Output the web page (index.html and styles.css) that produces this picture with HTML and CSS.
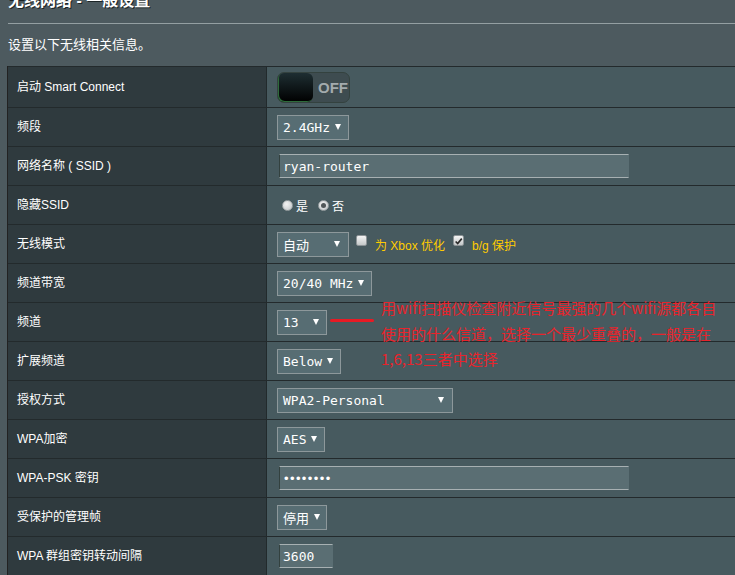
FILE: index.html
```html
<!DOCTYPE html>
<html lang="zh-CN">
<head>
<meta charset="utf-8">
<title>无线网络 - 一般设置</title>
<link rel="stylesheet" href="styles.css">
</head>
<body>
<div class="page">
  <h1 class="title">无线网络 - 一般设置</h1>
  <div class="sep"></div>
  <p class="intro">设置以下无线相关信息。</p>

  <div class="form">
    <div class="row first">
      <div class="lbl">启动 Smart Connect</div>
      <div class="val">
        <div class="switch"><span class="knob"></span><span class="off">OFF</span></div>
      </div>
    </div>
    <div class="row">
      <div class="lbl">频段</div>
      <div class="val"><div class="sel">2.4GHz<i class="arr"></i></div></div>
    </div>
    <div class="row">
      <div class="lbl">网络名称 ( SSID )</div>
      <div class="val"><div class="inp wide">ryan-router</div></div>
    </div>
    <div class="row">
      <div class="lbl">隐藏SSID</div>
      <div class="val">
        <span class="radio"></span><span class="rtxt">是</span>
        <span class="radio on"></span><span class="rtxt">否</span>
      </div>
    </div>
    <div class="row">
      <div class="lbl">无线模式</div>
      <div class="val">
        <div class="sel fixed w72 cjk">自动<i class="arr"></i></div>
        <span class="cb"></span><span class="ytxt">为 Xbox 优化</span>
        <span class="cb checked"><svg viewBox="0 0 11 11" width="11" height="11"><path d="M2 5.5 L4.5 8 L9.5 2" fill="none" stroke="#2a2a2a" stroke-width="2"/></svg></span><span class="ytxt">b/g 保护</span>
      </div>
    </div>
    <div class="row">
      <div class="lbl">频道带宽</div>
      <div class="val"><div class="sel">20/40 MHz<i class="arr"></i></div></div>
    </div>
    <div class="row">
      <div class="lbl">频道</div>
      <div class="val"><div class="sel fixed w50">13<i class="arr"></i></div></div>
    </div>
    <div class="row">
      <div class="lbl">扩展频道</div>
      <div class="val"><div class="sel">Below<i class="arr"></i></div></div>
    </div>
    <div class="row">
      <div class="lbl">授权方式</div>
      <div class="val"><div class="sel fixed w176">WPA2-Personal<i class="arr"></i></div></div>
    </div>
    <div class="row">
      <div class="lbl">WPA加密</div>
      <div class="val"><div class="sel">AES<i class="arr"></i></div></div>
    </div>
    <div class="row">
      <div class="lbl">WPA-PSK 密钥</div>
      <div class="val"><div class="inp wide dots">••••••••</div></div>
    </div>
    <div class="row">
      <div class="lbl">受保护的管理帧</div>
      <div class="val"><div class="sel fixed w50 cjk">停用<i class="arr"></i></div></div>
    </div>
    <div class="row">
      <div class="lbl">WPA 群组密钥转动间隔</div>
      <div class="val"><div class="inp short">3600</div></div>
    </div>

    <div class="note-line"></div>
    <div class="note">用wifi扫描仪检查附近信号最强的几个wifi源都各自<br>使用的什么信道，选择一个最少重叠的，一般是在<br>1,6,13三者中选择</div>
  </div>
</div>
</body>
</html>
```

FILE: styles.css
```css
html, body {
  margin: 0;
  padding: 0;
  overflow: hidden;
  background: #4d5a5f;
}
body {
  width: 735px;
  height: 575px;
  font-family: "Liberation Sans", Arial, "Noto Sans CJK SC", sans-serif;
  color: #fff;
}
.page {
  padding-left: 7px;
}
.title {
  margin: -9px 0 0 1px;
  font-size: 16px;
  line-height: 20px;
  font-weight: bold;
  color: #fff;
  text-shadow: 1px 1px 0 #1c2426;
}
.sep {
  margin: 12px 0 0 1px;
  height: 1px;
  background: #949fa2;
}
.intro {
  margin: 11px 0 0 1px;
  font-size: 13px;
  line-height: 20px;
  color: #fff;
}
.form {
  position: relative;
  margin-top: 11px;
  border-left: 1px solid #222;
}
.row {
  display: flex;
  height: 38px;
  border-top: 1px solid #232a2c;
}
.row.first {
  height: 40px;
}
.lbl {
  width: 249px;
  flex: none;
  padding: 0 0 4px 9px;
  box-sizing: content-box;
  display: flex;
  align-items: center;
  background: #2f3a3e;
  border-right: 1px solid #222a2c;
  font-size: 12px;
  color: #fff;
}
.val {
  flex: 1;
  padding-left: 10px;
  display: flex;
  align-items: center;
  background: #475a5f;
  font-size: 12px;
}
.switch {
  width: 71px;
  height: 29px;
  border: 1px solid #34423f;
  border-radius: 7px;
  background: #3e4c50;
  display: flex;
  align-items: center;
  box-sizing: content-box;
}
.knob {
  width: 35px;
  height: 29px;
  border-radius: 6px;
  background: linear-gradient(#1e2e32, #000);
  box-shadow: inset 1px -1px 0 #2d6b3a;
}
.off {
  margin-left: 5px;
  font-size: 15px;
  font-weight: bold;
  color: #a3abad;
}
.sel {
  display: inline-flex;
  align-items: center;
  height: 23px;
  padding: 0 7px 0 5px;
  gap: 5px;
  border: 1px solid #8d989b;
  background: #576d73;
  font-family: "DejaVu Sans Mono", "Noto Sans CJK SC", monospace;
  font-size: 13px;
  color: #fff;
  white-space: nowrap;
}
.sel.cjk {
  font-family: "Noto Sans CJK SC", sans-serif;
  font-size: 13px;
}
.sel.fixed {
  justify-content: space-between;
  box-sizing: border-box;
  height: 25px;
  padding-right: 8px;
}
.w72 { width: 72px; }
.w50 { width: 50px; }
.sel.fixed.w50 { padding-right: 7px; }
.w176 { width: 176px; }
.arr {
  display: block;
  flex: none;
  width: 0;
  height: 0;
  border-left: 3px solid transparent;
  border-right: 3px solid transparent;
  border-top: 6px solid #fff;
}
.inp {
  box-sizing: border-box;
  height: 24px;
  margin-left: 2px;
  padding-left: 3px;
  display: flex;
  align-items: center;
  background: #5a6e73;
  border-top: 1px solid #a7b0b2;
  border-bottom: 1px solid #a7b0b2;
  border-left: 1px solid #33413f;
  border-right: 1px solid #5a6e73;
  font-family: "DejaVu Sans Mono", monospace;
  font-size: 13px;
  color: #fff;
}
.inp.wide { width: 350px; }
.inp.short { width: 54px; }
.inp.dots {
  font-family: "Liberation Sans", sans-serif;
  font-size: 13px;
  letter-spacing: 1.4px;
  padding-left: 4px;
}
.radio {
  width: 11px;
  height: 11px;
  margin-left: 5px;
  border-radius: 50%;
  box-sizing: border-box;
  border: 1px solid #9aa1a3;
  background: radial-gradient(circle at 40% 35%, #f2f2f2, #bfc4c6);
  display: inline-flex;
  align-items: center;
  justify-content: center;
}
.radio.on {
  margin-left: 10px;
}
.radio.on::after {
  content: "";
  width: 5px;
  height: 5px;
  border-radius: 50%;
  background: #505658;
}
.rtxt {
  margin-left: 3px;
  font-family: "Noto Sans CJK SC", sans-serif;
  font-size: 12px;
  color: #fff;
}
.cb {
  width: 11px;
  height: 11px;
  box-sizing: border-box;
  margin-left: 7px;
  margin-top: -8px;
  border: 1px solid #8d9497;
  border-radius: 2px;
  background: linear-gradient(#f4f4f4, #c4c8c9);
  display: inline-flex;
}
.cb.checked {
  margin-left: 8px;
}
.cb svg {
  display: block;
}
.ytxt {
  margin-left: 8px;
  font-size: 12px;
  color: #ffcc00;
}
.note-line {
  position: absolute;
  left: 322px;
  top: 253px;
  width: 44px;
  height: 3px;
  border-radius: 2px;
  background: #e81a24;
}
.note {
  position: absolute;
  left: 373px;
  top: 229px;
  width: 360px;
  font-family: "Noto Sans CJK SC", sans-serif;
  font-size: 15px;
  line-height: 25.5px;
  color: #e8242c;
  white-space: nowrap;
}
```
